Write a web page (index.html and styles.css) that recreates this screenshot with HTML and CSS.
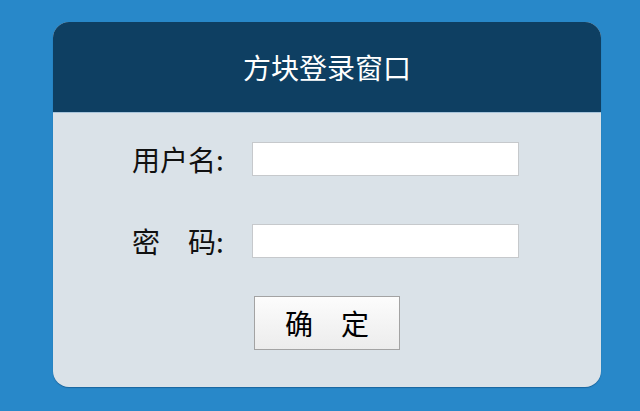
FILE: index.html
```html
<!DOCTYPE html>
<html lang="zh-CN">
<head>
    <meta charset="UTF-8">
    <meta name="viewport" content="width=device-width, initial-scale=1.0">
    <title>方块登录窗口</title>
    <link rel="stylesheet" href="styles.css">
</head>
<body>
    <div class="login-box">
        <div class="login-header">方块登录窗口</div>
        <form class="login-body">
            <div class="form-row">
                <label class="form-label" for="username">用户名:</label>
                <input id="username" class="form-input" type="text">
            </div>
            <div class="form-row">
                <label class="form-label" for="password">密　码:</label>
                <input id="password" class="form-input" type="password">
            </div>
            <div class="form-actions">
                <button type="button" class="submit-btn">确　定</button>
            </div>
        </form>
    </div>
</body>
</html>
```

FILE: styles.css
```css
body { margin: 0; padding-top: 22px; background: #2888c9; font-family: "Noto Sans CJK SC", "Noto Sans", sans-serif; height: 389px; }
.login-box { width: 548px; margin-left: 53px; border-radius: 16px; overflow: hidden; background: #dae2e8; box-shadow: 0 1px 1px rgba(0, 40, 80, 0.35); }
.login-header { height: 90px; background: #0e3f62; color: #fff; font-size: 28px; line-height: 90px; text-align: center; border-bottom: 1px solid #a8c4da; }
.login-body { margin: 0; padding: 29px 0 37px 79px; display: flex; flex-direction: column; gap: 48px; }
.form-row { display: flex; align-items: center; }
.form-label { width: 120px; font-size: 28px; color: #111; line-height: 34px; }
.form-input { box-sizing: border-box; width: 267px; height: 34px; margin: 0; padding: 0 3px; border: 1px solid #c6c9cc; background: #fff; }
.form-actions { display: flex; justify-content: center; margin-left: -79px; margin-top: -10px; }
.submit-btn { width: 146px; height: 54px; font-family: inherit; font-size: 28px; color: #000; border: 1px solid #a3a3a3; background: linear-gradient(to bottom, #fcfcfc, #ececec); padding: 0; cursor: pointer; }
```
